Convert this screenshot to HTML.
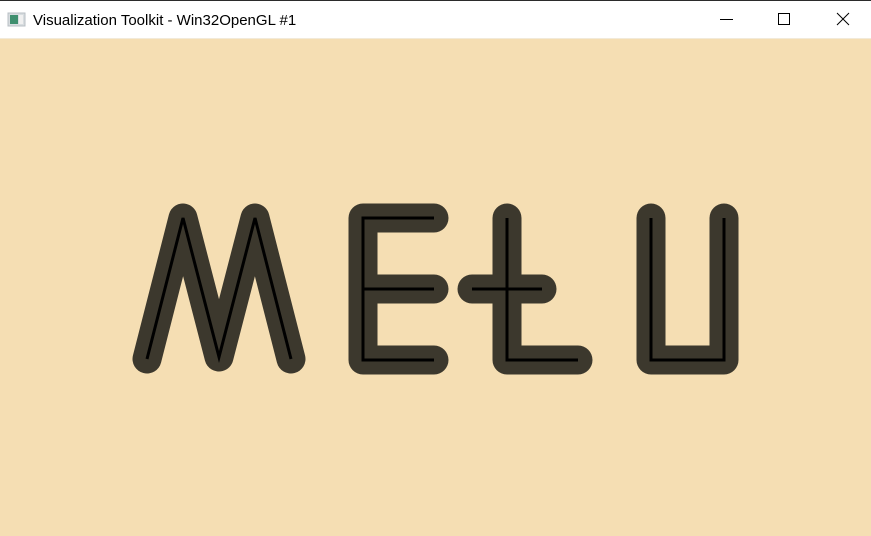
<!DOCTYPE html>
<html><head><meta charset="utf-8"><style>
html,body{margin:0;padding:0;width:871px;height:536px;overflow:hidden;background:#f5deb3;}
</style></head><body>
<svg width="871" height="536" xmlns="http://www.w3.org/2000/svg" style="position:absolute;left:0;top:0">
<rect x="0" y="0" width="871" height="536" fill="#f5deb3"/>
<rect x="0" y="0" width="871" height="39" fill="#ffffff"/>
<rect x="0" y="0" width="871" height="1" fill="#2b2b2b"/>
<rect x="0" y="38" width="871" height="1" fill="#f2ead9"/>
<rect x="8" y="13" width="17" height="13" fill="#d8dde0" stroke="#b8bfc4" stroke-width="1"/>
<rect x="10" y="15" width="8" height="9" fill="#3f8f6f"/>
<rect x="19" y="15" width="4" height="9" fill="#f0f0f0"/>
<text x="33" y="25" font-family="Liberation Sans, sans-serif" font-size="15" fill="#000">Visualization Toolkit - Win32OpenGL #1</text>
<line x1="720" y1="19.5" x2="733" y2="19.5" stroke="#000" stroke-width="1"/>
<rect x="778.5" y="13.5" width="11" height="11" fill="none" stroke="#000" stroke-width="1"/>
<path d="M837 13 L849 25 M849 13 L837 25" stroke="#000" stroke-width="1"/>
<g fill="none" stroke-linecap="round" stroke-linejoin="round">
<g stroke="#3c382d" stroke-width="29">
<path d="M147 359 L183 218 L219 357 L255 218 L291 359"/>
<path d="M434 218 L363 218 L363 360 L434 360 M363 289 L434 289"/>
<path d="M507 218 L507 360 L578 360 M472 289 L542 289"/>
<path d="M651 218 L651 360 L724 360 L724 218"/>
</g>
<g stroke="#000" stroke-width="3" stroke-linecap="butt" stroke-linejoin="miter">
<path d="M147 359 L183 218 L219 357 L255 218 L291 359"/>
<path d="M434 218 L363 218 L363 360 L434 360 M363 289 L434 289"/>
<path d="M507 218 L507 360 L578 360 M472 289 L542 289"/>
<path d="M651 218 L651 360 L724 360 L724 218"/>
</g>
</g>
</svg>
</body></html>
